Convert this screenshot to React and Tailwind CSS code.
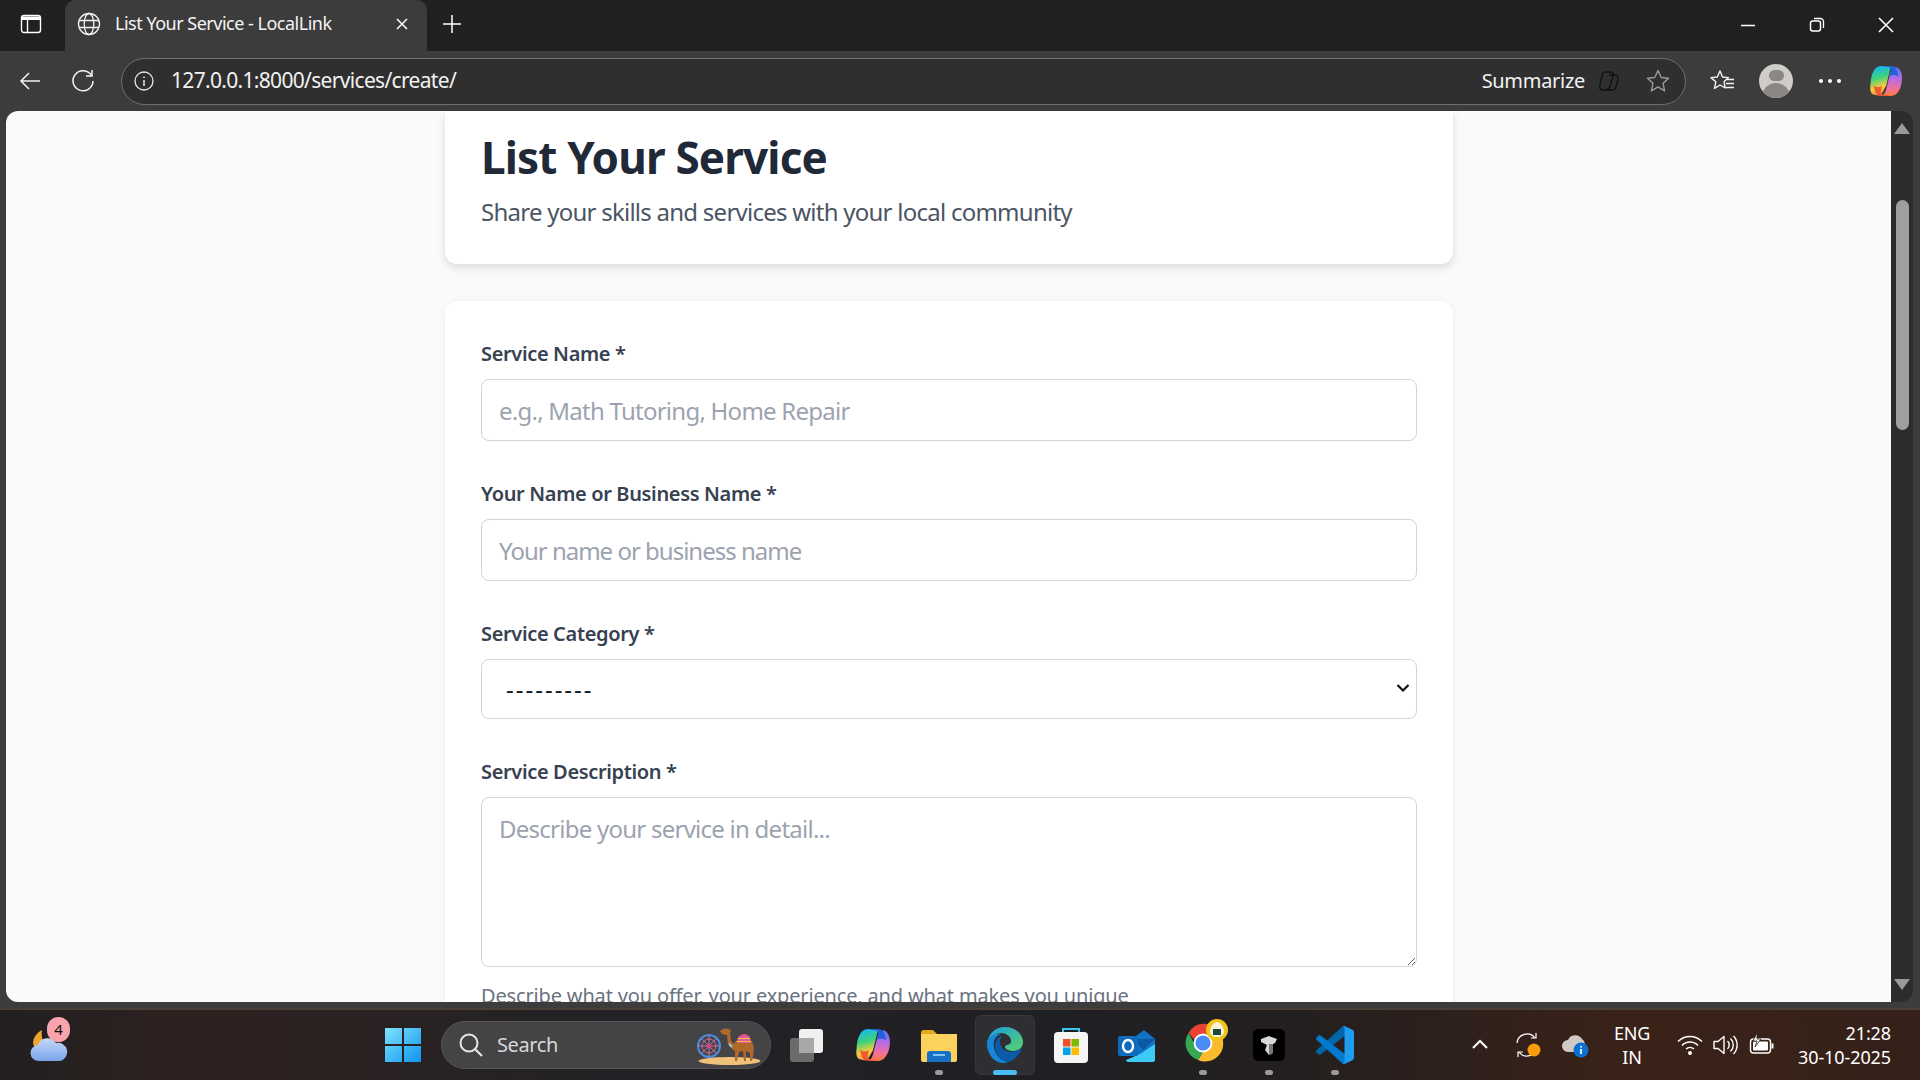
import React from "react";

const SEGOE = { fontFamily: '"Noto Sans", "Open Sans", sans-serif' };

function I({ w = 20, h = 20, vb = "0 0 20 20", children, className = "" }) {
  return (
    <svg width={w} height={h} viewBox={vb} fill="none" className={`shrink-0 ${className}`}>
      {children}
    </svg>
  );
}

function Field({ label, children, className = "" }) {
  return (
    <div className={className}>
      <label className="block mb-[10px] text-[20px] leading-[30px] font-semibold text-[#374151] tracking-[-0.35px] whitespace-nowrap">{label}</label>
      {children}
    </div>
  );
}

function CopilotLogo({ size = 34 }) {
  return (
    <I w={size} h={size} vb="0 0 34 34">
      <defs>
        <linearGradient id="cpa" x1="0.3" y1="0" x2="0.5" y2="1">
          <stop offset="0" stopColor="#17b4f6" />
          <stop offset="0.4" stopColor="#3ed27c" />
          <stop offset="0.72" stopColor="#f4d03a" />
          <stop offset="1" stopColor="#f58a5a" />
        </linearGradient>
        <linearGradient id="cpb" x1="0.5" y1="0" x2="0.5" y2="1">
          <stop offset="0" stopColor="#5a6ff0" />
          <stop offset="0.4" stopColor="#b56ce8" />
          <stop offset="0.75" stopColor="#f2709a" />
          <stop offset="1" stopColor="#fb7a3a" />
        </linearGradient>
      </defs>
      <path d="M12 2H22L17 22 12 31C9 32 6 31 3 30 1 27 1 24 1.500 20 2 11 5 2 12 2Z" fill="url(#cpa)" />
      <path d="M22 32H12C15 31 16 29 17 26L21 10C22 6 24 3 27 3 31 4 33 9 33 14 33 23 29 32 22 32Z" fill="url(#cpb)" />
      <path d="M12 2H21C25 2 27 4 28 7L29.500 13C27 10.500 24 10.500 21 12L22 8C22.500 5 21 3 18 3z" fill="#1e63dc" />
      <path d="M22 32H13C9 32 7 30 6 27L4.500 21C7 23.500 10 23.500 13 22L12 26C11.500 29 13 31 16 31z" fill="#f2502f" opacity="0.9" />
    </I>
  );
}

function TabStrip() {
  return (
    <div className="h-[51px] bg-[#202020] flex items-end shrink-0">
      <div className="w-[65px] h-full flex items-center justify-center -translate-x-[2px] -translate-y-[2px]">
        <I w={22} h={22} vb="0 0 22 22">
          <rect x="1.500" y="2.500" width="19" height="17" rx="2.500" stroke="#fff" strokeWidth="1.400" />
          <path d="M2 3.500h18v3.500H2z" fill="#fff" />
          <path d="M7.500 7v12" stroke="#fff" strokeWidth="1.400" />
        </I>
      </div>
      <div className="relative w-[362px] h-full bg-[#3c3c3c] rounded-t-[10px] flex items-center pl-[11px] pr-[12px] pb-[4px]">
        <I w={26} h={26} vb="0 0 26 26">
          <g stroke="#f2f2f2" strokeWidth="1.300">
            <circle cx="13" cy="13" r="10.500" />
            <ellipse cx="13" cy="13" rx="4.800" ry="10.500" />
            <path d="M3 9.500h20M3 16.500h20" />
          </g>
        </I>
        <span className="ml-[13px] text-[18px] text-[#f4f4f4] tracking-[-0.5px] whitespace-nowrap">List Your Service - LocalLink</span>
        <span className="ml-auto mr-[5px]">
          <I w={16} h={16} vb="0 0 16 16"><path d="M3 3l10 10M13 3L3 13" stroke="#fff" strokeWidth="1.500" /></I>
        </span>
      </div>
      <div className="h-full flex items-center ml-[15px] pb-[4px]">
        <I w={20} h={20} vb="0 0 20 20"><path d="M10 1v18M1 10h18" stroke="#fff" strokeWidth="1.500" /></I>
      </div>
      <div className="ml-auto h-full flex items-center pb-[2px]">
        <div className="w-[68px] flex justify-center">
          <I w={18} h={18} vb="0 0 18 18"><path d="M2 9.500h14" stroke="#fff" strokeWidth="1.500" /></I>
        </div>
        <div className="w-[69px] flex justify-center">
          <I w={18} h={18} vb="0 0 18 18">
            <rect x="2.500" y="5" width="10" height="10" rx="2.200" stroke="#fff" strokeWidth="1.500" />
            <path d="M6 2.500h6.500a3 3 0 0 1 3 3V12" stroke="#fff" strokeWidth="1.300" />
          </I>
        </div>
        <div className="w-[69px] flex justify-center">
          <I w={18} h={18} vb="0 0 18 18"><path d="M2 2l14 14M16 2L2 16" stroke="#fff" strokeWidth="1.600" /></I>
        </div>
      </div>
    </div>
  );
}

function Toolbar() {
  return (
    <div className="h-[60px] bg-[#3c3c3c] flex items-center shrink-0">
      <div className="w-[60px] flex justify-center">
        <I w={24} h={24} vb="0 0 24 24"><path d="M22 12H3M11 4l-8 8 8 8" stroke="#f4f4f4" strokeWidth="1.500" /></I>
      </div>
      <div className="w-[48px] flex justify-center -ml-[1px]">
        <I w={26} h={26} vb="0 0 26 26">
          <path d="M21.500 7.500A10 10 0 1 0 23 13" stroke="#f4f4f4" strokeWidth="1.500" />
          <path d="M22 2v6h-6" stroke="#f4f4f4" strokeWidth="1.500" />
        </I>
      </div>
      <div className="ml-[14px] w-[1565px] h-[47px] rounded-full bg-[#2f2f2f] border border-[#6f6f6f] flex items-center pl-[11px] pr-[14px] shrink-0">
        <I w={22} h={22} vb="0 0 22 22">
          <circle cx="11" cy="11" r="9" stroke="#e8e8e8" strokeWidth="1.300" />
          <path d="M11 10v6M11 6.500v1.500" stroke="#e8e8e8" strokeWidth="1.500" />
        </I>
        <span className="ml-[16px] text-[21px] text-[#f2f2f2] tracking-[-0.68px]">127.0.0.1:8000/services/create/</span>
        <span className="ml-auto text-[20px] text-[#f2f2f2] tracking-[-0.3px]">Summarize</span>
        <span className="ml-[12px]">
          <I w={24} h={24} vb="0 0 24 24">
            <g stroke="#111" strokeWidth="1.300">
              <path d="M8 3h6c2 0 3 2 2 4l-3 10c-1 3-3 4-5 4H6c-3 0-4-2-3-5l2-9c.5-2.500 1.500-4 3-4z" />
              <path d="M12 6h6c2 0 3 2 3 4l-2 8c-.5 2-2 3-4 3H9" />
            </g>
          </I>
        </span>
        <span className="ml-[24px]">
          <I w={26} h={26} vb="0 0 26 26">
            <path d="M13 2.500l3.200 7 7.300.8-5.400 5 1.500 7.500L13 18.900 6.400 22.800l1.500-7.500-5.400-5 7.300-.8z" stroke="#9a9a9a" strokeWidth="1.400" strokeLinejoin="round" />
          </I>
        </span>
      </div>
      <div className="ml-[23px]">
        <I w={26} h={26} vb="0 0 26 26">
          <path d="M11 3l2.500 6 6 .6-4.500 4.200 1.200 6.200L11 17l-5.500 3.300 1.300-6.500L2 9.600l6.300-.6z" stroke="#f4f4f4" strokeWidth="1.400" strokeLinejoin="round" />
          <path d="M18 11.500h7M17 15.500h8M17 19.500h8" stroke="#f4f4f4" strokeWidth="1.400" />
        </I>
      </div>
      <div className="ml-[24px] w-[34px] h-[34px] rounded-full bg-[#cfcdc9] overflow-hidden relative shrink-0 flex flex-col items-center">
        <div className="mt-[6px] w-[15px] h-[15px] rounded-full bg-[#8c8783]" />
        <div className="mt-[2px] w-[28px] h-[20px] rounded-t-full bg-[#8c8783]" />
      </div>
      <div className="ml-[26px] flex gap-[5px]">
        <div className="w-[4px] h-[4px] rounded-full bg-white" />
        <div className="w-[4px] h-[4px] rounded-full bg-white" />
        <div className="w-[4px] h-[4px] rounded-full bg-white" />
      </div>
      <div className="ml-[28px]"><CopilotLogo /></div>
    </div>
  );
}

const inputCls = "block w-full h-[62px] rounded-[8px] border border-[#d1d5db] px-[17px] text-[24px] placeholder:text-[#9ca3af] bg-white";

function Content() {
  return (
    <div className="flex-1 min-h-0 ml-[6px] flex overflow-hidden">
      <div className="flex-1 min-w-0 bg-[#f9fafb] rounded-l-[12px] overflow-hidden flex justify-center">
        <div className="w-[1008px] shrink-0 ml-[1px]">
          <div className="bg-white rounded-b-[12px] shadow-[0_4px_8px_rgba(0,0,0,0.12)] h-[153px] px-[36px] pt-[16px] mb-[37px]">
            <h1 className="text-[44px] leading-[60px] font-bold text-[#1f2937] tracking-[-0.85px] whitespace-nowrap">List Your Service</h1>
            <p className="mt-[9px] text-[24px] leading-[32px] text-[#4b5563] tracking-[-0.75px] whitespace-nowrap">Share your skills and services with your local community</p>
          </div>
          <div className="bg-white rounded-t-[12px] px-[36px] pt-[38px] shadow-[0_0_6px_rgba(0,0,0,0.05)] h-[720px]">
            <Field label="Service Name *" className="mb-[38px]">
              <input readOnly placeholder="e.g., Math Tutoring, Home Repair" className={`${inputCls} tracking-[-0.75px]`} />
            </Field>
            <Field label="Your Name or Business Name *" className="mb-[38px]">
              <input readOnly placeholder="Your name or business name" className={`${inputCls} tracking-[-1px]`} />
            </Field>
            <Field label="Service Category *" className="mb-[38px]">
              <div className="relative h-[60px] rounded-[8px] border border-[#d1d5db] flex items-center pl-[24px] text-[24px] text-[#111827] bg-white">
                <span className="tracking-[2px]">---------</span>
                <span className="absolute right-[5px] top-[20px]">
                  <I w={16} h={16} vb="0 0 16 16"><path d="M2.500 5l5.500 5.500L13.500 5" stroke="#111" strokeWidth="2.200" /></I>
                </span>
              </div>
            </Field>
            <Field label="Service Description *" className="mb-[14px]">
              <textarea readOnly placeholder="Describe your service in detail..." className="block w-full h-[170px] rounded-[8px] border border-[#d1d5db] px-[17px] py-[13px] text-[24px] tracking-[-0.75px] placeholder:text-[#9ca3af] bg-white resize-y" />
            </Field>
            <p className="text-[20px] leading-[30px] text-[#6b7280] tracking-[-0.16px] whitespace-nowrap">Describe what you offer, your experience, and what makes you unique</p>
          </div>
        </div>
      </div>
      <div className="w-[22px] bg-[#2c2c2c] rounded-r-[12px] flex flex-col items-center shrink-0 mr-[7px]">
        <div className="mt-[12px] w-0 h-0 border-x-[8px] border-x-transparent border-b-[11px] border-b-[#9a9a9a]" />
        <div className="mt-[66px] w-[13px] h-[230px] rounded-full bg-[#9f9f9f]" />
        <div className="mt-auto mb-[12px] w-0 h-0 border-x-[8px] border-x-transparent border-t-[11px] border-t-[#9a9a9a]" />
      </div>
    </div>
  );
}

function TaskIcon({ children, dot, active }) {
  return (
    <div className="relative w-[66px] h-[60px] flex items-center justify-center shrink-0">
      {active && <div className="absolute inset-y-0 left-[3px] right-[3px] bg-[#2e2e33] rounded-[6px] border border-[#37373c]" />}
      <div className="relative flex items-center justify-center">{children}</div>
      {dot && <div className="absolute bottom-[0px] left-1/2 -translate-x-1/2 w-[8px] h-[5px] rounded-full bg-[#9a9a9a]" />}
      {active && <div className="absolute bottom-[0px] left-1/2 -translate-x-1/2 w-[24px] h-[5px] rounded-full bg-[#47bff5]" />}
    </div>
  );
}

function Taskbar() {
  return (
    <div className="h-[72px] shrink-0 bg-[linear-gradient(90deg,#221f20_0%,#2e211f_10%,#242225_30%,#1f2024_55%,#241f1f_68%,#3a2218_85%,#35211a_100%)] border-t-2 border-t-[#4a4038] flex items-center relative text-white">
      <div className="absolute left-[28px] top-[8px] w-[44px] h-[50px]">
        <I w={40} h={44} vb="0 0 40 44" className="absolute left-0 top-[6px]">
          <defs>
            <linearGradient id="cloud" x1="0" y1="0" x2="0" y2="1">
              <stop offset="0" stopColor="#c6d8f8" />
              <stop offset="1" stopColor="#7aa4ea" />
            </linearGradient>
          </defs>
          <path d="M14 6c-1 6 0 14 8 16l-14 2C2 20 6 10 14 6z" fill="#f2a531" />
          <path d="M11 37a8 8 0 0 1-1-16 10 10 0 0 1 18-2 9 9 0 0 1 4 18z" fill="url(#cloud)" />
        </I>
        <div className="absolute left-[19px] top-[-1px] w-[23px] h-[25px] rounded-full bg-[#f9a3ad] text-[#111] text-[15px] leading-[25px] text-center">4</div>
      </div>

      <div className="ml-[385px]">
        <I w={36} h={36} vb="0 0 36 36">
          <defs>
            <linearGradient id="win" x1="0" y1="0" x2="1" y2="1">
              <stop offset="0" stopColor="#7ee4fb" />
              <stop offset="1" stopColor="#0e93f0" />
            </linearGradient>
          </defs>
          <path d="M0 1h17v16H0zM19 1h17v16H19zM0 19h17v16H0zM19 19h17v16H19z" fill="url(#win)" />
        </I>
      </div>
      <div className="ml-[20px] w-[330px] h-[48px] rounded-full bg-[#444446] border border-[#545456] flex items-center pl-[16px] relative shrink-0">
        <I w={26} h={26} vb="0 0 26 26">
          <circle cx="11" cy="11" r="8.500" stroke="#e6e6e6" strokeWidth="2" />
          <path d="M17 17l7 7" stroke="#e6e6e6" strokeWidth="2.200" />
        </I>
        <span className="ml-[13px] text-[20px] text-[#d8d8d8] tracking-[-0.4px]">Search</span>
        <span className="absolute right-[4px] top-[3px]">
          <I w={70} h={42} vb="0 0 70 42">
            <ellipse cx="33.500" cy="36" rx="31" ry="4" fill="#efc27a" />
            <circle cx="13" cy="21" r="11" stroke="#4b8be0" strokeWidth="2" />
            <circle cx="13" cy="21" r="7" stroke="#d9668f" strokeWidth="1" />
            <path d="M13 10v22M2 21h22M5.500 13.500l15 15M20.500 13.500l-15 15" stroke="#b07ab8" strokeWidth="1" />
            <circle cx="13" cy="21" r="2.500" fill="#e0407a" />
            <path d="M24 6L28 3.500 33 4 35 6 34 9 35 16 38 19 42 13C45 8 52 8 54 13L57 19C58 23 58 28 56 36H54V28L50 26V36H48L47 26 43 27 41 36H39V26L36 24 32 19 31 10 26 9Z" fill="#b0692b" />
            <path d="M42 13C45 8 52 8 54 13L55 18H42Z" fill="#e2559c" />
            <path d="M42 13.500H54M41 16.500H55" stroke="#f3c93e" strokeWidth="1.200" />
            <path d="M33 19l3 3" stroke="#7fd0e0" strokeWidth="2" />
          </I>
        </span>
      </div>

      <div className="ml-[3px] flex items-center">
        <TaskIcon>
          <I w={36} h={36} vb="0 0 36 36">
            <rect x="1" y="11" width="24" height="24" rx="3" fill="#6b6b6b" />
            <rect x="10" y="2" width="24" height="24" rx="3" fill="#f0f0f0" />
            <rect x="10" y="11" width="15" height="15" fill="#a8a8a8" />
          </I>
        </TaskIcon>
        <TaskIcon><CopilotLogo size={36} /></TaskIcon>
        <TaskIcon dot>
          <I w={38} h={38} vb="0 0 38 38">
            <path d="M1 7a3 3 0 0 1 3-3h9l4 4H1z" fill="#e3a91c" />
            <path d="M1 8h36v26a2 2 0 0 1-2 2H3a2 2 0 0 1-2-2z" fill="#fcd25f" />
            <path d="M7 36v-8a3 3 0 0 1 3-3h18a3 3 0 0 1 3 3v8z" fill="#1670c4" />
            <path d="M13 29h12" stroke="#7cc4f2" strokeWidth="2" />
          </I>
        </TaskIcon>
        <TaskIcon active>
          <I w={38} h={38} vb="0 0 38 38">
            <defs>
              <linearGradient id="edgeA" x1="0" y1="0" x2="1" y2="1">
                <stop offset="0" stopColor="#1b9de2" />
                <stop offset="1" stopColor="#58d26a" />
              </linearGradient>
            </defs>
            <path d="M19 1c10 0 18 7 18 15 0 6-5 9-10 9-4 0-8-2-8-4 0-3 6-1 6-6 0-5-5-8-10-8C8 7 2 13 1 18 2 8 9 1 19 1z" fill="url(#edgeA)" />
            <path d="M1 18c0-6 6-11 14-10-6 2-8 7-7 13 1 8 7 14 14 15-2 1-4 1-5 1C9 37 1 29 1 18z" fill="#1487d8" />
            <path d="M9 20c0-5 3-9 7-10-2 3-3 6-1 10 2 5 9 7 15 5l6-3c-3 8-9 14-15 14-7-1-12-8-12-16z" fill="#0c5ba8" />
          </I>
        </TaskIcon>
        <TaskIcon>
          <I w={36} h={38} vb="0 0 36 38">
            <path d="M10 7V3h16v4" stroke="#35c3ef" strokeWidth="2" />
            <rect x="1" y="6" width="34" height="31" rx="4" fill="#f5f5f5" />
            <rect x="10" y="13" width="7.500" height="7.500" fill="#f25022" />
            <rect x="18.500" y="13" width="7.500" height="7.500" fill="#7fba00" />
            <rect x="10" y="21.500" width="7.500" height="7.500" fill="#00a4ef" />
            <rect x="18.500" y="21.500" width="7.500" height="7.500" fill="#ffb900" />
          </I>
        </TaskIcon>
        <TaskIcon>
          <I w={38} h={36} vb="0 0 38 36">
            <path d="M14 12L26 3l11 9v16H14z" fill="#1173c5" />
            <path d="M14 12l23 0-12 11z" fill="#0a5aa3" />
            <path d="M8 33c0 1 1 2 3 2h24c1 0 2-1 2-2V17L22 27z" fill="#3ccbf4" />
            <rect x="0" y="9" width="20" height="20" rx="2" fill="#0f6cbd" />
            <ellipse cx="10" cy="19" rx="5" ry="6" stroke="#fff" strokeWidth="2.400" />
          </I>
        </TaskIcon>
        <TaskIcon dot>
          <I w={46} h={46} vb="0 0 46 46" className="translate-x-[4px] -translate-y-[4px]">
            <path d="M4.500 15A18 18 0 0 1 36.500 16H19a9 9 0 0 0-8.500 6z" fill="#e84235" />
            <path d="M4.500 15l8.500 15a9 9 0 0 0 6 4L14 42A18 18 0 0 1 4.500 15z" fill="#34a853" />
            <path d="M36.500 16A18 18 0 0 1 14 42l9-14a9 9 0 0 0 3-12z" fill="#f9bb2d" />
            <circle cx="19" cy="25" r="8.500" fill="#4a8af4" stroke="#fff" strokeWidth="1.800" />
            <circle cx="33" cy="12" r="11" fill="#f0c419" />
            <path d="M33 4c3 0 7 5 7 9 0 4-3 6-7 6s-7-2-7-6c0-4 4-9 7-9z" fill="#f7f2d8" />
            <rect x="29" y="11" width="8" height="6" fill="#1c4a3c" />
          </I>
        </TaskIcon>
        <TaskIcon dot>
          <I w={32} h={32} vb="0 0 32 32">
            <rect width="32" height="32" rx="5" fill="#000" />
            <path d="M8 10l8-3 8 3-2 4-2 1v9l-4 2-4-5 2-5-6-3z" fill="#d8d8d8" />
            <path d="M16 15l4 0v9l-4 2z" fill="#777" />
          </I>
        </TaskIcon>
        <TaskIcon dot>
          <I w={38} h={38} vb="0 0 100 100">
            <path d="M96.4614 10.7962L75.8569 0.875542C73.4719 -0.272773 70.6217 0.211611 68.75 2.08333L1.29858 63.5832C-0.515693 65.2373 -0.513607 68.0937 1.30308 69.7452L6.81272 74.754C8.29793 76.1042 10.5347 76.2036 12.1338 74.9905L93.3609 13.3699C96.086 11.3026 100 13.2462 100 16.6667V16.4275C100 14.0265 98.6246 11.8378 96.4614 10.7962Z" fill="#0065A9" />
            <path d="M96.4614 89.2038L75.8569 99.1245C73.4719 100.273 70.6217 99.7884 68.75 97.9167L1.29858 36.4169C-0.515693 34.7627 -0.513607 31.9063 1.30308 30.2548L6.81272 25.246C8.29793 23.8958 10.5347 23.7964 12.1338 25.0095L93.3609 86.6301C96.086 88.6974 100 86.7538 100 83.3334V83.5726C100 85.9735 98.6246 88.1622 96.4614 89.2038Z" fill="#007ACC" />
            <path d="M75.8578 99.1263C73.4721 100.274 70.6219 99.7885 68.75 97.9166C71.0564 100.223 75 98.5895 75 95.3278V4.67213C75 1.41039 71.0564 -0.223106 68.75 2.08329C70.6219 0.211402 73.4721 -0.273666 75.8578 0.873633L96.4587 10.7807C98.6234 11.8217 100 14.0112 100 16.4132V83.5871C100 85.9891 98.6234 88.1786 96.4586 89.2196L75.8578 99.1263Z" fill="#1F9CF0" />
          </I>
        </TaskIcon>
      </div>

      <div className="ml-auto flex items-center">
        <I w={20} h={20} vb="0 0 20 20" className="mr-[22px]"><path d="M3 13l7-7 7 7" stroke="#fff" strokeWidth="2" /></I>
        <I w={30} h={30} vb="0 0 30 30" className="mr-[20px]">
          <path d="M5 13A10 10 0 0 1 23 8M24 3v5h-5M25 17a10 10 0 0 1-18 5M6 27v-5h5" stroke="#fff" strokeWidth="1.200" />
          <circle cx="22" cy="20" r="6.500" fill="#f99b0c" />
        </I>
        <I w={28} h={28} vb="0 0 28 28" className="mr-[22px]">
          <path d="M6 21a6 6 0 0 1 0-12 8 8 0 0 1 14-1 6 6 0 0 1 2 8v5z" fill="#cfcac6" />
          <circle cx="19" cy="19" r="7.500" fill="#0b72d4" />
          <path d="M19 18v5M19 15v1.500" stroke="#fff" strokeWidth="1.800" />
        </I>
        <div className="w-[40px] text-center text-[18px] leading-[24px] text-white tracking-[-0.2px] mr-[25px]">
          <div>ENG</div>
          <div>IN</div>
        </div>
        <I w={26} h={24} vb="0 0 26 24" className="mr-[9px]">
          <path d="M1 8.500a17 17 0 0 1 24 0M5 12.500a11 11 0 0 1 16 0M9 16a6 6 0 0 1 8 0" stroke="#fff" strokeWidth="1.500" />
          <circle cx="13" cy="20" r="2" fill="#fff" />
        </I>
        <I w={26} h={26} vb="0 0 26 26" className="mr-[11px]">
          <path d="M2 9.500h4l6-5v17l-6-5H2z" stroke="#fff" strokeWidth="1.400" strokeLinejoin="round" />
          <path d="M15.500 9a5.500 5.500 0 0 1 0 8M18.500 6.500a9 9 0 0 1 0 13M21.500 4a13 13 0 0 1 0 18" stroke="#fff" strokeWidth="1.400" />
        </I>
        <I w={26} h={26} vb="0 0 26 26" className="mr-[20px]">
          <rect x="1.500" y="7" width="20" height="14" rx="3" stroke="#fff" strokeWidth="1.400" />
          <rect x="4" y="9.500" width="15" height="9" rx="1" fill="#fff" />
          <path d="M22.500 11.500h2v5h-2z" fill="#fff" />
          <path d="M8 1L4 9h4l-2 6 6-8H8z" fill="#fff" stroke="#35211a" strokeWidth="0.800" />
        </I>
        <div className="w-[96px] text-right text-[18px] leading-[24px] text-white mr-[29px] tracking-[-0.1px]">
          <div>21:28</div>
          <div className="whitespace-nowrap">30-10-2025</div>
        </div>
      </div>
    </div>
  );
}

export default function App() {
  return (
    <div style={SEGOE} className="w-[1920px] h-[1080px] overflow-hidden flex flex-col bg-[#3c3c3c]">
      <TabStrip />
      <Toolbar />
      <Content />
      <div className="h-[6px] bg-[#3c3c3c] shrink-0" />
      <Taskbar />
    </div>
  );
}
